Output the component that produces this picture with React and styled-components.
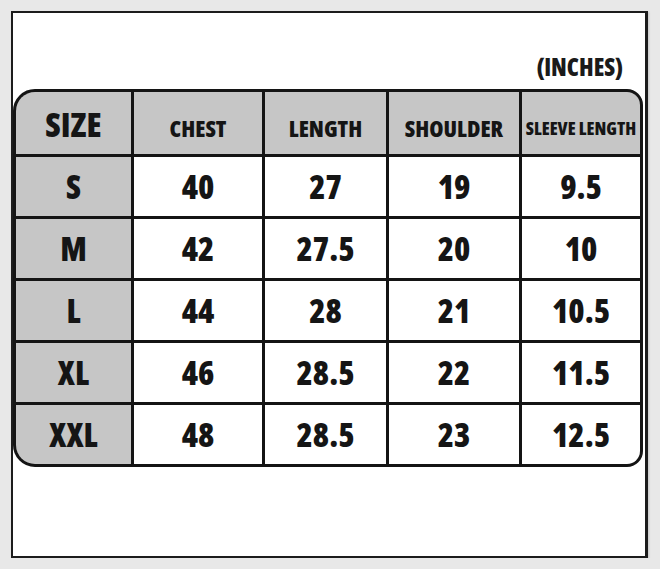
import React from "react";
import styled, { createGlobalStyle } from "styled-components";

const rows = [
  ["S", "40", "27", "19", "9.5"],
  ["M", "42", "27.5", "20", "10"],
  ["L", "44", "28", "21", "10.5"],
  ["XL", "46", "28.5", "22", "11.5"],
  ["XXL", "48", "28.5", "23", "12.5"],
];

const headers = ["CHEST", "LENGTH", "SHOULDER", "SLEEVE LENGTH"];

function App() {
  return (
    <>
      <GlobalStyle />
      <Card>
        <Units>(INCHES)</Units>
        <Chart>
          <HeadCell $first>SIZE</HeadCell>
          {headers.map((h, i) => (
            <HeadCell key={h} $small={i === 3}>
              {h}
            </HeadCell>
          ))}
          {rows.map((row) =>
            row.map((value, i) => (
              <Cell key={row[0] + i} $label={i === 0}>
                {value}
              </Cell>
            ))
          )}
        </Chart>
      </Card>
    </>
  );
}

const GlobalStyle = createGlobalStyle`
  html, body {
    margin: 0;
    padding: 0;
    background: #e8e8e8;
  }
  body {
    font-family: "Open Sans", "DejaVu Sans", sans-serif;
    font-stretch: 75%;
    font-weight: 800;
  }
`;

const Card = styled.div`
  box-sizing: border-box;
  width: 637px;
  height: 547px;
  margin: 11px 0 0 11px;
  background: #fff;
  border: 2px solid #1c1c1c;
  border-right-width: 3px;
  display: flex;
  flex-direction: column;
  box-shadow: 1px 1px 2px rgba(0, 0, 0, 0.15);
`;

const Units = styled.div`
  height: 76px;
  box-sizing: border-box;
  display: flex;
  align-items: flex-end;
  justify-content: flex-end;
  padding: 0 22px 6px 0;
  font-size: 24px;
  color: #1a1a1a;
`;

const Chart = styled.div`
  display: grid;
  grid-template-columns: 115px 128px 121px 130px 118px;
  grid-template-rows: 62px repeat(5, 59px);
  gap: 3px;
  width: 630px;
  box-sizing: border-box;
  background: #141414;
  border: 3px solid #141414;
  border-radius: 22px 16px 16px 22px;
  overflow: hidden;
`;

const HeadCell = styled.div`
  background: #c6c6c6;
  display: flex;
  align-items: center;
  justify-content: center;
  padding-top: ${(p) => (p.$first ? "2px" : "10px")};
  color: #151515;
  font-size: ${(p) => (p.$first ? "34px" : p.$small ? "18px" : "23px")};
  white-space: nowrap;
`;

const Cell = styled.div`
  background: ${(p) => (p.$label ? "#c6c6c6" : "#fff")};
  display: flex;
  align-items: center;
  justify-content: center;
  color: #151515;
  font-size: 33px;
`;

export default App;
